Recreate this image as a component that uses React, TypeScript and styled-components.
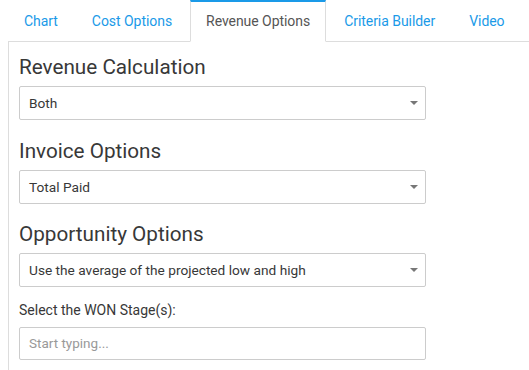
import React from "react";
import styled, { createGlobalStyle } from "styled-components";

const Global = createGlobalStyle`
  html, body { margin: 0; padding: 0; background: #fff; }
  body { font-family: Roboto, "Helvetica Neue", Arial, sans-serif; color: #333; }
  * { box-sizing: border-box; }
`;

const Page = styled.div`
  padding-left: 8px;
  width: 529px;
  height: 370px;
  overflow: hidden;
`;

const TabBar = styled.ul`
  display: flex;
  list-style: none;
  margin: 0;
  padding: 0;
  border-bottom: 1px solid #ddd;
  height: 42px;
`;

const Tab = styled.li<{ $active?: boolean }>`
  margin-right: 2px;
  margin-bottom: -1px;
  padding: 10px 15px;
  height: 42px;
  font-size: 14px;
  letter-spacing: -0.05px;
  line-height: 20px;
  white-space: nowrap;
  border: 1px solid transparent;
  color: ${(p) => (p.$active ? "#555" : "#1a9ae8")};
  ${(p) =>
    p.$active &&
    `
    background: #fff;
    border-color: #ddd;
    border-bottom-color: #fff;
    border-top: 2px solid #1a9ae8;
    padding-top: 9px;
  `}
`;

const Panel = styled.div`
  border-left: 1px solid #ddd;
  padding: 13px 10px 0 10px;
  height: 328px;
`;

const Section = styled.div`
  margin-bottom: 18.5px;
`;

const Heading = styled.h3`
  margin: 0 0 7px 0;
  font-size: 20.7px;
  font-weight: 400;
  line-height: 24px;
  color: #383838;
`;

const Label = styled.div`
  font-size: 14px;
  line-height: 20px;
  color: #383838;
  margin: -6px 0 7px 0;
`;

const SelectBox = styled.div`
  position: relative;
  width: 407px;
  height: 34px;
  border: 1px solid #ccc;
  border-radius: 2px;
  padding: 0 9px;
  display: flex;
  align-items: center;
  font-size: 13.7px;
  color: #383838;
`;

const Caret = styled.span`
  position: absolute;
  right: 7px;
  top: 14px;
  width: 0;
  height: 0;
  border-left: 4px solid transparent;
  border-right: 4px solid transparent;
  border-top: 4px solid #777;
`;

const Input = styled.div`
  width: 407px;
  height: 33px;
  border: 1px solid #ccc;
  border-radius: 2px;
  padding: 0 9px;
  display: flex;
  align-items: center;
  font-size: 13.5px;
  color: #999;
`;

const tabs = ["Chart", "Cost Options", "Revenue Options", "Criteria Builder", "Video"];

export default function App() {
  return (
    <Page>
      <Global />
      <TabBar>
        {tabs.map((t) => (
          <Tab key={t} $active={t === "Revenue Options"}>
            {t}
          </Tab>
        ))}
      </TabBar>
      <Panel>
        <Section>
          <Heading>Revenue Calculation</Heading>
          <SelectBox>
            Both
            <Caret />
          </SelectBox>
        </Section>
        <Section>
          <Heading>Invoice Options</Heading>
          <SelectBox>
            Total Paid
            <Caret />
          </SelectBox>
        </Section>
        <Section>
          <Heading>Opportunity Options</Heading>
          <SelectBox>
            Use the average of the projected low and high
            <Caret />
          </SelectBox>
        </Section>
        <Label>Select the WON Stage(s):</Label>
        <Input>Start typing...</Input>
      </Panel>
    </Page>
  );
}
